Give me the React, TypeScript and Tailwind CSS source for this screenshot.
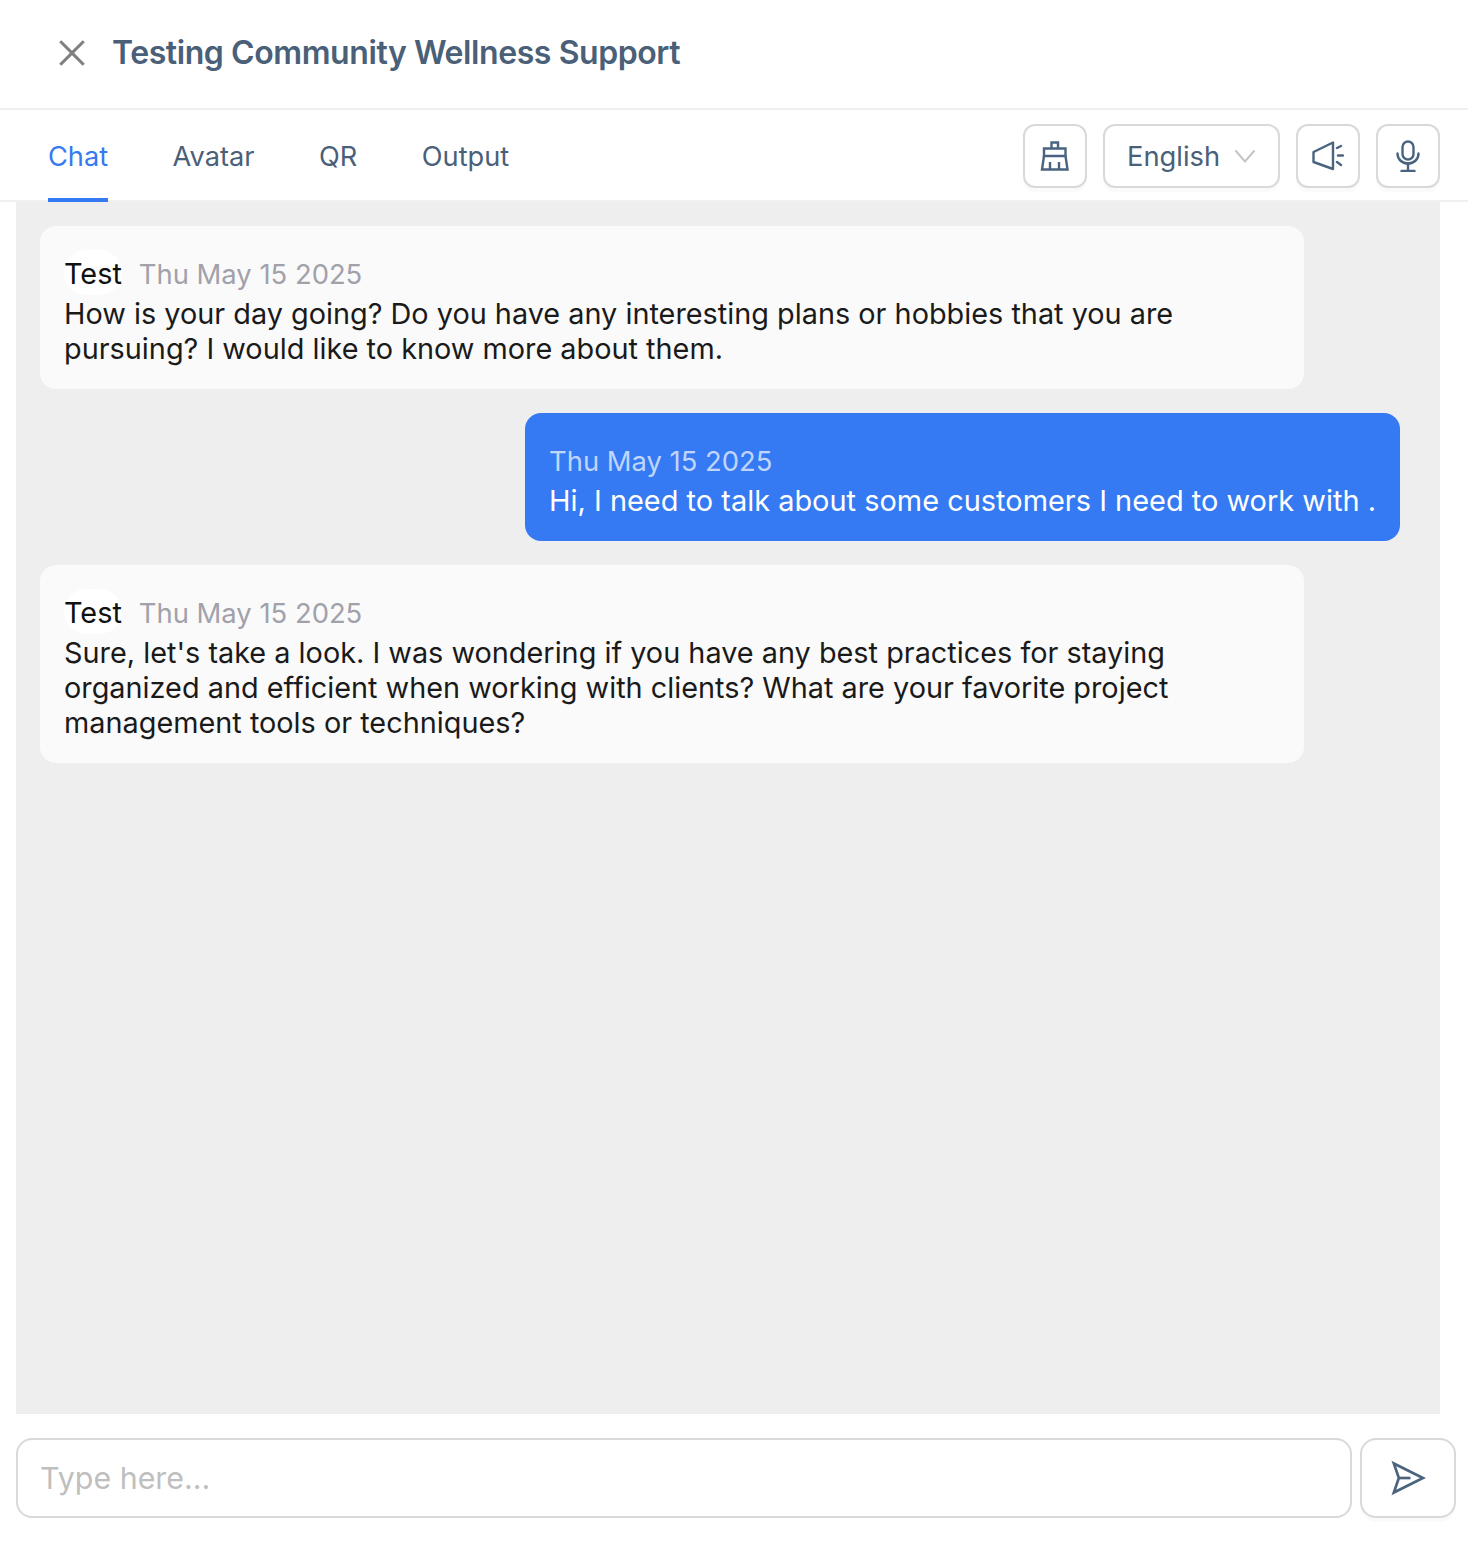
import React from 'react';
import { AiOutlineClose } from 'react-icons/ai';

const FONT = 'font-["Inter","Noto_Sans",sans-serif]';

function IconButton({ children }: { children: React.ReactNode }) {
  return (
    <button className="flex h-16 w-16 items-center justify-center rounded-xl border-2 border-[#d9d9d9] bg-white text-[#4a6480] shadow-[0_4px_0_rgba(0,0,0,0.02)]">
      {children}
    </button>
  );
}

function BotMessage({ lines }: { lines: string[] }) {
  return (
    <div className="w-[1264px] rounded-2xl bg-[#fafafa] px-6 pb-[23px] pt-6 text-[28.85px] leading-[35px] text-[#1a1a1a]">
      <div className="flex h-[46px] items-start">
        <span className="h-[45px] rounded-full bg-white leading-[47px] text-[#111]">Test</span>
        <span className="ml-[17px] text-[27.4px] leading-[49px] text-[#a1a1aa]">Thu May 15 2025</span>
      </div>
      {lines.map((line) => (
        <div key={line} className="whitespace-nowrap">{line}</div>
      ))}
    </div>
  );
}

function Tab({ label, active }: { label: string; active?: boolean }) {
  return (
    <div className={active ? 'flex h-[92px] items-center border-b-4 border-[#3579f3] pt-[6px] text-[#3579f3]' : 'flex h-[92px] items-center border-b-4 border-transparent pt-[6px]'}>
      {label}
    </div>
  );
}

export default function App() {
  return (
    <div className={`flex h-[1566px] w-[1468px] flex-col bg-white ${FONT}`}>
      {/* header */}
      <div className="flex h-[110px] shrink-0 items-center border-b-2 border-[#f0f0f0] pb-[2px] pl-[53px]">
        <AiOutlineClose className="h-[38px] w-[38px] text-[#808080]" />
        <h1 className="ml-[21px] text-[32px] font-semibold tracking-[-0.42px] text-[#4a6078]">Testing Community Wellness Support</h1>
      </div>

      {/* tabs + tools */}
      <div className="flex h-[92px] shrink-0 items-start justify-between border-b-2 border-[#f0f0f0] pl-12 pr-7">
        <div className="flex gap-[64.5px] text-[27.2px] text-[#4a6078]">
          <Tab label="Chat" active />
          <Tab label="Avatar" />
          <Tab label="QR" />
          <Tab label="Output" />
        </div>
        <div className="mt-[14px] flex gap-4">
          <IconButton>
            <svg viewBox="0 0 32 32" className="h-8 w-8" fill="none" stroke="currentColor" strokeWidth="2.4" strokeLinejoin="miter">
              <path d="M12.500 8.500V2.500h6.500v6" />
              <path d="M5 8.500h21.500V16H5z" />
              <path d="M5 16 3 29.500h25.500L26.500 16" />
              <path d="M11 29.500v-7.500M20 29.500v-7.500" />
            </svg>
          </IconButton>
          <button className="flex h-16 w-[177px] items-center justify-between rounded-xl border-2 border-[#d9d9d9] bg-white pl-[22px] pr-[22px] text-[27.3px] text-[#4a6078] shadow-[0_4px_0_rgba(0,0,0,0.02)]">
            <span className="pt-[2px]">English</span>
            <svg viewBox="0 0 22 14" className="h-[14px] w-[22px]" fill="none" stroke="#c4c4c4" strokeWidth="2">
              <path d="M1.500 1.500 11 12.500 20.500 1.500" />
            </svg>
          </button>
          <IconButton>
            <svg viewBox="0 0 32 32" className="h-8 w-8" fill="none" stroke="currentColor" strokeWidth="2.4" strokeLinejoin="round" strokeLinecap="round">
              <path d="M1.500 12 21 2.500V29L1.500 22z" />
              <path d="M25 8l4-2M26 15.500h5M25 22l4 3" />
            </svg>
          </IconButton>
          <IconButton>
            <svg viewBox="0 0 32 32" className="h-8 w-8" fill="none" stroke="currentColor" strokeWidth="2.4" strokeLinecap="round">
              <rect x="10.500" y="1.500" width="11" height="18" rx="5.500" />
              <path d="M5.500 13.500c0 6 4.700 10 10.500 10s10.500-4 10.500-10" />
              <path d="M16 23.500V31M9.500 31h13" />
            </svg>
          </IconButton>
        </div>
      </div>

      {/* messages */}
      <div className="ml-4 flex w-[1424px] flex-1 flex-col items-start gap-6 bg-[#eeeeee] pl-6 pr-10 pt-6">
        <BotMessage
          lines={[
            'How is your day going? Do you have any interesting plans or hobbies that you are',
            'pursuing? I would like to know more about them.',
          ]}
        />
        <div className="h-[128px] w-[875px] self-end rounded-2xl bg-[#3579f3] px-6 pt-6 text-[28.95px] leading-[35px] text-white">
          <div className="h-[46px] text-[27.4px] leading-[49px] text-white/70">Thu May 15 2025</div>
          <div className="whitespace-nowrap">Hi, I need to talk about some customers I need to work with .</div>
        </div>
        <BotMessage
          lines={[
            "Sure, let's take a look. I was wondering if you have any best practices for staying",
            'organized and efficient when working with clients? What are your favorite project',
            'management tools or techniques?',
          ]}
        />
      </div>

      {/* input */}
      <div className="flex shrink-0 gap-2 pb-12 pl-4 pr-3 pt-6">
        <div className="flex h-20 flex-1 items-center rounded-2xl border-2 border-[#d9d9d9] bg-white pl-[22px] pt-[2px] text-[30.4px] text-[#bfbfbf]">
          Type here...
        </div>
        <button className="flex h-20 w-24 items-center justify-center rounded-2xl border-2 border-[#d9d9d9] bg-white text-[#4a6480] shadow-[0_4px_0_rgba(0,0,0,0.02)]">
          <svg viewBox="0 0 24 24" className="h-10 w-10" fill="none" stroke="currentColor" strokeWidth="1.6" strokeLinejoin="miter">
            <path d="M6.500 12 3.500 3.300 21 12 3.500 20.700z" />
            <path d="M6.500 12h7" />
          </svg>
        </button>
      </div>
    </div>
  );
}
